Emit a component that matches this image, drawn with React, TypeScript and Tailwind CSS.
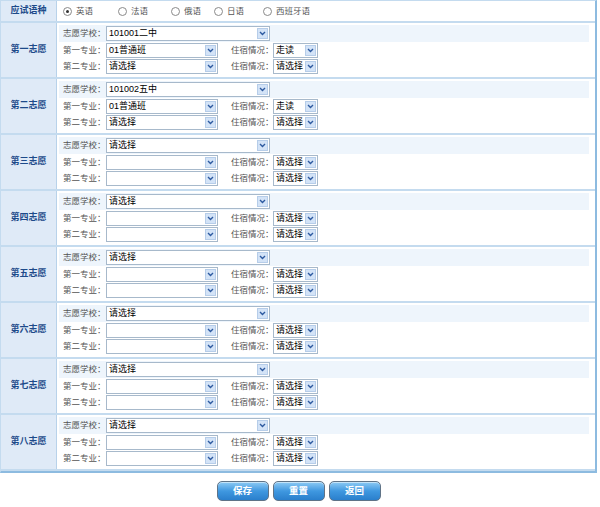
import React from 'react';

type Choice = {
  title: string;
  school: string;
  major1: string;
  major2: string;
  stay1: string;
  stay2: string;
};

const CHOICES: Choice[] = [
  { title: '第一志愿', school: '101001二中', major1: '01普通班', major2: '请选择', stay1: '走读', stay2: '请选择' },
  { title: '第二志愿', school: '101002五中', major1: '01普通班', major2: '请选择', stay1: '走读', stay2: '请选择' },
  { title: '第三志愿', school: '请选择', major1: '', major2: '', stay1: '请选择', stay2: '请选择' },
  { title: '第四志愿', school: '请选择', major1: '', major2: '', stay1: '请选择', stay2: '请选择' },
  { title: '第五志愿', school: '请选择', major1: '', major2: '', stay1: '请选择', stay2: '请选择' },
  { title: '第六志愿', school: '请选择', major1: '', major2: '', stay1: '请选择', stay2: '请选择' },
  { title: '第七志愿', school: '请选择', major1: '', major2: '', stay1: '请选择', stay2: '请选择' },
  { title: '第八志愿', school: '请选择', major1: '', major2: '', stay1: '请选择', stay2: '请选择' },
];

// widths taken from the spacing between radio buttons in the form
const LANGS = [
  { name: '英语', w: 'w-[55px]' },
  { name: '法语', w: 'w-[53px]' },
  { name: '俄语', w: 'w-[43px]' },
  { name: '日语', w: 'w-[49px]' },
  { name: '西班牙语', w: 'w-[50px]' },
];

function FakeSelect({ value, width }: { value: string; width: string }) {
  return (
    <div className={`${width} h-[15px] flex items-stretch border border-[#a7b9cb] bg-white`}>
      <div className="flex-1 min-w-0 pl-[2px] text-[9px] leading-[13px] text-black whitespace-nowrap">
        {value}
      </div>
      <div className="w-[11px] shrink-0 my-[1px] mr-[1px] bg-[#d3e3f7] border border-[#b6cde9] flex items-center justify-center">
        <svg width="7" height="5" viewBox="0 0 7 5">
          <path d="M1 1 L3.5 3.5 L6 1" stroke="#2d5aa0" strokeWidth="1.4" fill="none" />
        </svg>
      </div>
    </div>
  );
}

function Label({ text, className = '' }: { text: string; className?: string }) {
  return <div className={`text-[8.5px] text-[#555] whitespace-nowrap ${className}`}>{text}</div>;
}

function ChoiceBlock({ c }: { c: Choice }) {
  return (
    <div className="flex h-[56px] border-b-2 border-[#c4dbef]">
      <div className="w-[56px] shrink-0 bg-[#dfeaf7] border-r border-[#b8d2ea] flex items-center justify-center text-[9px] font-bold text-[#1d4a8a]">
        {c.title}
      </div>
      <div className="flex-1 pl-[2px] pt-[2px]">
        <div className="flex items-center h-[17px] bg-[#eef5fc] pl-[4px] mr-[6px]">
          <Label text="志愿学校：" className="w-[43px]" />
          <FakeSelect value={c.school} width="w-[164px]" />
        </div>
        <div className="flex items-center h-[16px] pl-[4px]">
          <Label text="第一专业：" className="w-[43px]" />
          <FakeSelect value={c.major1} width="w-[112px]" />
          <Label text="住宿情况：" className="ml-[13px] w-[42px]" />
          <FakeSelect value={c.stay1} width="w-[45px]" />
        </div>
        <div className="flex items-center h-[16px] pl-[4px]">
          <Label text="第二专业：" className="w-[43px]" />
          <FakeSelect value={c.major2} width="w-[112px]" />
          <Label text="住宿情况：" className="ml-[13px] w-[42px]" />
          <FakeSelect value={c.stay2} width="w-[45px]" />
        </div>
      </div>
    </div>
  );
}

export default function App() {
  return (
    <div
      className="w-[600px] h-[507px] bg-white"
      style={{ fontFamily: '"Liberation Sans", "Noto Sans CJK SC", sans-serif' }}
    >
      <div className="w-[597px] border-t border-l border-[#c4dbef] border-r-2 border-r-[#8dbbe0] border-b-2 border-b-[#8dbbe0]">
        <div className="flex h-[22px] border-b-2 border-[#c4dbef]">
          <div className="w-[56px] shrink-0 bg-[#dfeaf7] border-r border-[#b8d2ea] flex items-center justify-center text-[9px] font-bold text-[#1d4a8a]">
            应试语种
          </div>
          <div className="flex-1 flex items-center pl-[6px]">
            {LANGS.map((l, i) => (
              <div key={l.name} className={`${l.w} flex items-center gap-[4px]`}>
                <div className="w-[9px] h-[9px] rounded-full border border-[#8a8a8a] bg-white flex items-center justify-center">
                  {i === 0 && <div className="w-[3px] h-[3px] rounded-full bg-[#333]" />}
                </div>
                <span className="text-[8.5px] text-[#555]">{l.name}</span>
              </div>
            ))}
          </div>
        </div>
        {CHOICES.map((c) => (
          <ChoiceBlock key={c.title} c={c} />
        ))}
      </div>
      <div className="flex justify-center gap-[4px] pt-[8px] pr-[3px]">
        {['保存', '重置', '返回'].map((b) => (
          <button
            key={b}
            className="w-[52px] h-[20px] rounded-[5px] border border-[#5f7387] bg-gradient-to-b from-[#8ccaf4] via-[#3f98e0] to-[#2a7fcc] text-white text-[9.5px] font-bold shadow-[inset_0_1px_0_rgba(255,255,255,0.5)]"
          >
            {b}
          </button>
        ))}
      </div>
    </div>
  );
}
